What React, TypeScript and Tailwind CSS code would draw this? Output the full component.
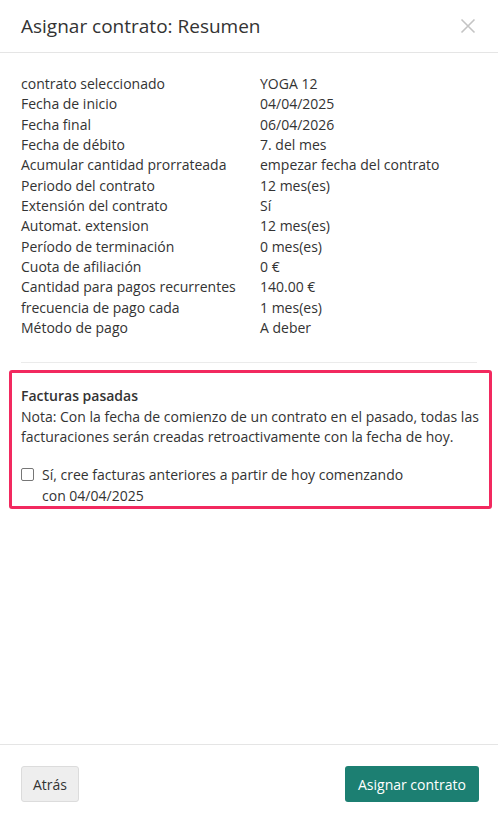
import React from 'react';

const rows: [string, string][] = [
  ['contrato seleccionado', 'YOGA 12'],
  ['Fecha de inicio', '04/04/2025'],
  ['Fecha final', '06/04/2026'],
  ['Fecha de débito', '7. del mes'],
  ['Acumular cantidad prorrateada', 'empezar fecha del contrato'],
  ['Periodo del contrato', '12 mes(es)'],
  ['Extensión del contrato', 'Sí'],
  ['Automat. extension', '12 mes(es)'],
  ['Período de terminación', '0 mes(es)'],
  ['Cuota de afiliación', '0 €'],
  ['Cantidad para pagos recurrentes', '140.00 €'],
  ['frecuencia de pago cada', '1 mes(es)'],
  ['Método de pago', 'A deber'],
];

const App: React.FC = () => {
  return (
    <div
      className="flex h-[822px] w-full flex-col bg-white text-[14px] text-[#333333]"
      style={{ fontFamily: '"Open Sans", "Liberation Sans", sans-serif' }}
    >
      {/* header */}
      <div className="flex h-[53px] items-center justify-between border-b border-[#e5e5e5] pl-[21px] pr-[20px]">
        <h1 className="text-[19px] font-normal leading-none text-[#333333]">Asignar contrato: Resumen</h1>
        <button className="flex h-[20px] w-[20px] items-center justify-center text-[#c4c4c4]">
          <svg width="16" height="16" viewBox="0 0 16 16" fill="none" stroke="currentColor" strokeWidth="1.6">
            <path d="M1.5 1.5 L14.5 14.5 M14.5 1.5 L1.5 14.5" />
          </svg>
        </button>
      </div>

      {/* body */}
      <div className="flex-1 px-[21px] pt-[21px]">
        <div className="leading-[20.33px]">
          {rows.map(([label, value], i) => (
            <div key={i} className="flex">
              <div className="w-[239px] shrink-0">{label}</div>
              <div>{value}</div>
            </div>
          ))}
        </div>

        <hr className="mt-[24px] border-t border-[#ebebeb]" />

        <div className="-ml-[12px] -mr-[15px] mt-[7px] rounded-[3px] border-[3px] border-[#f2295f] pb-0 pl-[9px] pr-[8px] pt-[13px] leading-[20.33px]">
          <div className="font-semibold">Facturas pasadas</div>
          <p>
            Nota: Con la fecha de comienzo de un contrato en el pasado, todas las facturaciones serán creadas
            retroactivamente con la fecha de hoy.
          </p>
          <label className="mt-[18px] flex items-start">
            <input
              type="checkbox"
              className="mr-[8px] mt-[3px] h-[13px] w-[13px] shrink-0 appearance-none rounded-[2px] border border-[#767676] bg-white"
            />
            <span className="pr-[70px]">Sí, cree facturas anteriores a partir de hoy comenzando con 04/04/2025</span>
          </label>
        </div>
      </div>

      {/* footer */}
      <div className="flex items-center justify-between border-t border-[#e5e5e5] pb-[20px] pl-[21px] pr-[19px] pt-[21px]">
        <button className="h-[36px] rounded-[3px] border border-[#dcdcdc] bg-[#eeeeee] px-[11px] text-[#333333]">
          Atrás
        </button>
        <button className="h-[36px] rounded-[3px] bg-[#1c7f72] px-[13px] text-white">Asignar contrato</button>
      </div>
    </div>
  );
};

export default App;
